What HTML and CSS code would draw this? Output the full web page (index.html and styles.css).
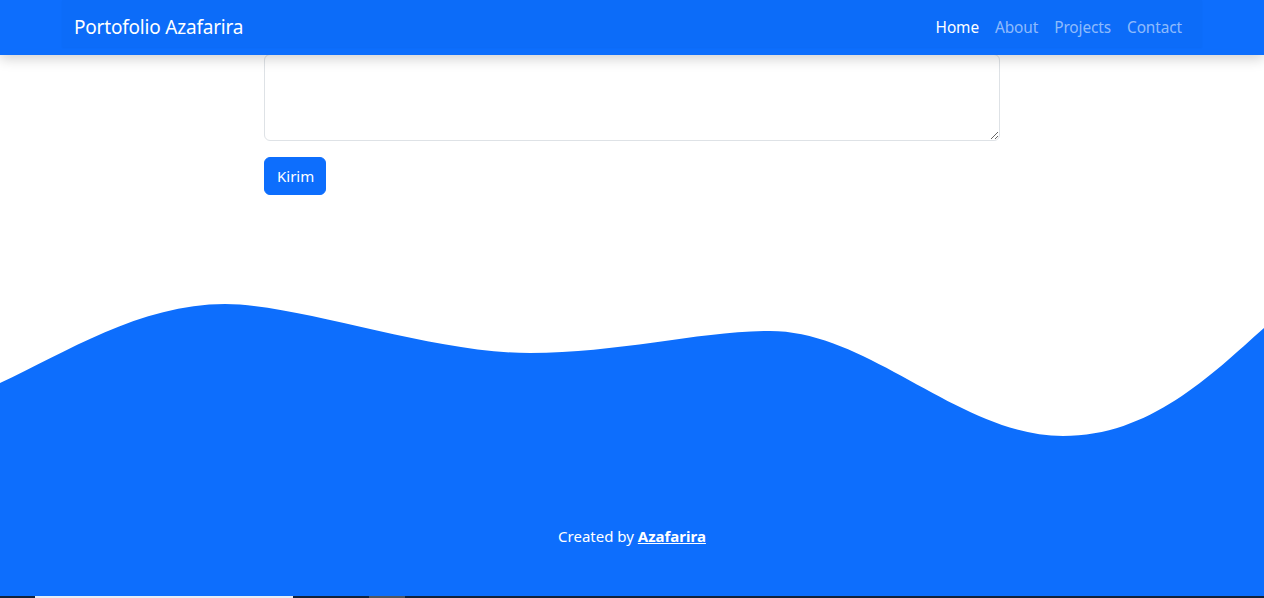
FILE: index.html
```html
<!DOCTYPE html>
<html lang="id">
<head>
<meta charset="utf-8">
<title>Portofolio Azafarira</title>
<link rel="stylesheet" href="styles.css">
</head>
<body>
<nav class="navbar">
  <div class="nav-container">
    <a class="brand" href="#">Portofolio Azafarira</a>
    <ul class="nav-links">
      <li><a class="nav-link active" href="#">Home</a></li>
      <li><a class="nav-link" href="#">About</a></li>
      <li><a class="nav-link" href="#">Projects</a></li>
      <li><a class="nav-link" href="#">Contact</a></li>
    </ul>
  </div>
</nav>
<main class="contact">
  <form class="contact-form">
    <textarea class="form-control" rows="3"></textarea>
    <button type="button" class="btn-primary">Kirim</button>
  </form>
</main>
<section class="wave-wrap">
  <svg class="wave" viewBox="0 0 1264 140" preserveAspectRatio="none" xmlns="http://www.w3.org/2000/svg">
    <path fill="#0d6efd" d="M0,82 C65,52 140,3 225,3 C300,3 430,52 530,52 C620,52 700,30 770,30 C870,30 960,135 1063,135 C1150,135 1210,75 1264,27 L1264,140 L0,140 Z"/>
  </svg>
</section>
<footer class="footer">
  <p>Created by <a href="#">Azafarira</a></p>
</footer>
<div class="bottom-strip">
  <span class="seg-light"></span>
  <span class="seg-grey"></span>
</div>
</body>
</html>
```
FILE: styles.css
```css
* { box-sizing: border-box; }
html, body { margin: 0; padding: 0; }
body {
  font-family: "Noto Sans", "Open Sans", sans-serif;
  font-size: 16px;
  color: #212529;
  background: #fff;
  height: 598px;
  overflow: hidden;
  display: flex;
  flex-direction: column;
}
.navbar {
  height: 55px;
  background: #0d6efd;
  box-shadow: 0 4px 12px rgba(0,0,0,0.18);
  position: relative;
  z-index: 2;
  flex: none;
}
.nav-container {
  width: 1140px;
  margin: 0 auto;
  padding: 8px 12px 0;
  height: 47px;
  display: flex;
  align-items: center;
  justify-content: space-between;
  background: rgba(0,0,0,0.015);
  box-shadow: 0 1px 2px rgba(0,0,0,0.03);
}
.brand {
  color: #fff;
  text-decoration: none;
  font-size: 19px;
  letter-spacing: -0.2px;
  line-height: 30px;
  margin-top: -1px;
}
.nav-links {
  list-style: none;
  margin: 0;
  padding: 0;
  display: flex;
}
.nav-link {
  display: block;
  padding: 8px 8px;
  font-size: 15.4px;
  letter-spacing: -0.1px;
  color: rgba(255,255,255,0.55);
  text-decoration: none;
  line-height: 24px;
  margin-top: 0;
}
.nav-link.active { color: #fff; }
.contact {
  width: 736px;
  margin: 0 auto;
  flex: none;
  position: relative;
  z-index: 1;
  margin-top: -1px;
}
.contact-form {
  display: flex;
  flex-direction: column;
  align-items: flex-start;
  gap: 16px;
}
.form-control {
  width: 736px;
  height: 87px;
  border: 1px solid #dee2e6;
  border-radius: 6px;
  font-family: inherit;
  font-size: 16px;
  padding: 6px 12px;
  resize: vertical;
}
.btn-primary {
  background: #0d6efd;
  color: #fff;
  border: 1px solid #0d6efd;
  border-radius: 6px;
  font-family: inherit;
  font-size: 15px;
  padding: 0 12px;
  height: 38px;
  width: 62px;
  line-height: 36px;
}
.wave-wrap {
  margin-top: auto;
  flex: none;
  line-height: 0;
}
.wave {
  display: block;
  width: 1264px;
  height: 140px;
}
.footer {
  background: #0d6efd;
  color: #fff;
  height: 156px;
  flex: none;
  display: flex;
  justify-content: center;
  align-items: flex-start;
  margin-top: -1px;
}
.footer p {
  margin: 84px 0 0;
  font-size: 15px;
  line-height: 24px;
}
.footer a {
  color: #fff;
  font-weight: 700;
}
.bottom-strip {
  height: 2px;
  background: #12223a;
  flex: none;
  display: flex;
}
.seg-light {
  margin-left: 35px;
  width: 258px;
  background: #e6edf5;
}
.seg-grey {
  margin-left: 76px;
  width: 36px;
  background: #4f5660;
}
```
